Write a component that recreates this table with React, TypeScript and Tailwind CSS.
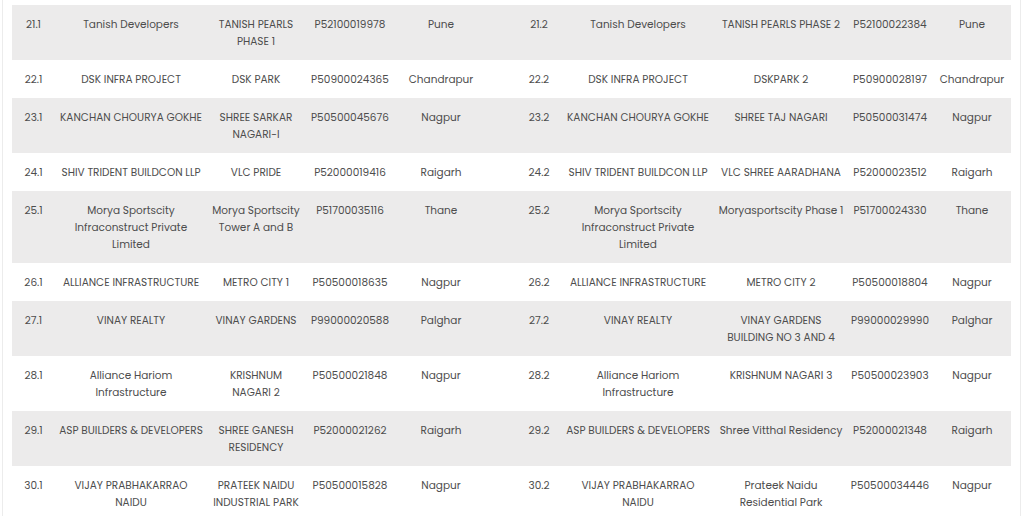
const rows: string[][][] = [
  [["21.1"], ["Tanish Developers"], ["TANISH PEARLS", "PHASE 1"], ["P52100019978"], ["Pune"], ["21.2"], ["Tanish Developers"], ["TANISH PEARLS PHASE 2"], ["P52100022384"], ["Pune"]],
  [["22.1"], ["DSK INFRA PROJECT"], ["DSK PARK"], ["P50900024365"], ["Chandrapur"], ["22.2"], ["DSK INFRA PROJECT"], ["DSKPARK 2"], ["P50900028197"], ["Chandrapur"]],
  [["23.1"], ["KANCHAN CHOURYA GOKHE"], ["SHREE SARKAR", "NAGARI-I"], ["P50500045676"], ["Nagpur"], ["23.2"], ["KANCHAN CHOURYA GOKHE"], ["SHREE TAJ NAGARI"], ["P50500031474"], ["Nagpur"]],
  [["24.1"], ["SHIV TRIDENT BUILDCON LLP"], ["VLC PRIDE"], ["P52000019416"], ["Raigarh"], ["24.2"], ["SHIV TRIDENT BUILDCON LLP"], ["VLC SHREE AARADHANA"], ["P52000023512"], ["Raigarh"]],
  [["25.1"], ["Morya Sportscity", "Infraconstruct Private", "Limited"], ["Morya Sportscity", "Tower A and B"], ["P51700035116"], ["Thane"], ["25.2"], ["Morya Sportscity", "Infraconstruct Private", "Limited"], ["Moryasportscity Phase 1"], ["P51700024330"], ["Thane"]],
  [["26.1"], ["ALLIANCE INFRASTRUCTURE"], ["METRO CITY 1"], ["P50500018635"], ["Nagpur"], ["26.2"], ["ALLIANCE INFRASTRUCTURE"], ["METRO CITY 2"], ["P50500018804"], ["Nagpur"]],
  [["27.1"], ["VINAY REALTY"], ["VINAY GARDENS"], ["P99000020588"], ["Palghar"], ["27.2"], ["VINAY REALTY"], ["VINAY GARDENS", "BUILDING NO 3 AND 4"], ["P99000029990"], ["Palghar"]],
  [["28.1"], ["Alliance Hariom", "Infrastructure"], ["KRISHNUM", "NAGARI 2"], ["P50500021848"], ["Nagpur"], ["28.2"], ["Alliance Hariom", "Infrastructure"], ["KRISHNUM NAGARI 3"], ["P50500023903"], ["Nagpur"]],
  [["29.1"], ["ASP BUILDERS & DEVELOPERS"], ["SHREE GANESH", "RESIDENCY"], ["P52000021262"], ["Raigarh"], ["29.2"], ["ASP BUILDERS & DEVELOPERS"], ["Shree Vitthal Residency"], ["P52000021348"], ["Raigarh"]],
  [["30.1"], ["VIJAY PRABHAKARRAO", "NAIDU"], ["PRATEEK NAIDU", "INDUSTRIAL PARK"], ["P50500015828"], ["Nagpur"], ["30.2"], ["VIJAY PRABHAKARRAO", "NAIDU"], ["Prateek Naidu", "Residential Park"], ["P50500034446"], ["Nagpur"]],
];

// column 5 is wide on the right so the second half starts further over
const cellPad = [
  "",
  "",
  "",
  "",
  "pr-[30px]",
  "",
  "",
  "",
  "",
  "",
];

export default function App() {
  return (
    <div className="h-[516px] overflow-hidden bg-white">
      <div
        className="ml-[2px] h-full w-[1019px] border-x border-[#ececec] pl-[9px] pt-[5px] text-[10.5px] leading-[17px] text-[#4d4d4d]"
        style={{ fontFamily: "Poppins, 'Open Sans', sans-serif" }}
      >
        <div className="grid w-[999px] grid-cols-[43px_152px_98px_90px_122px_44px_154px_132px_86px_78px]">
          {rows.map((row, i) =>
            row.map((cell, j) => (
              <div
                key={`${i}-${j}`}
                className={`py-[10.5px] text-center whitespace-nowrap ${
                  i % 2 === 0 ? "bg-[#ecebeb]" : "bg-white"
                } ${cellPad[j]}`}
              >
                {cell.map((line, k) => (
                  <div key={k}>{line}</div>
                ))}
              </div>
            ))
          )}
        </div>
      </div>
    </div>
  );
}
